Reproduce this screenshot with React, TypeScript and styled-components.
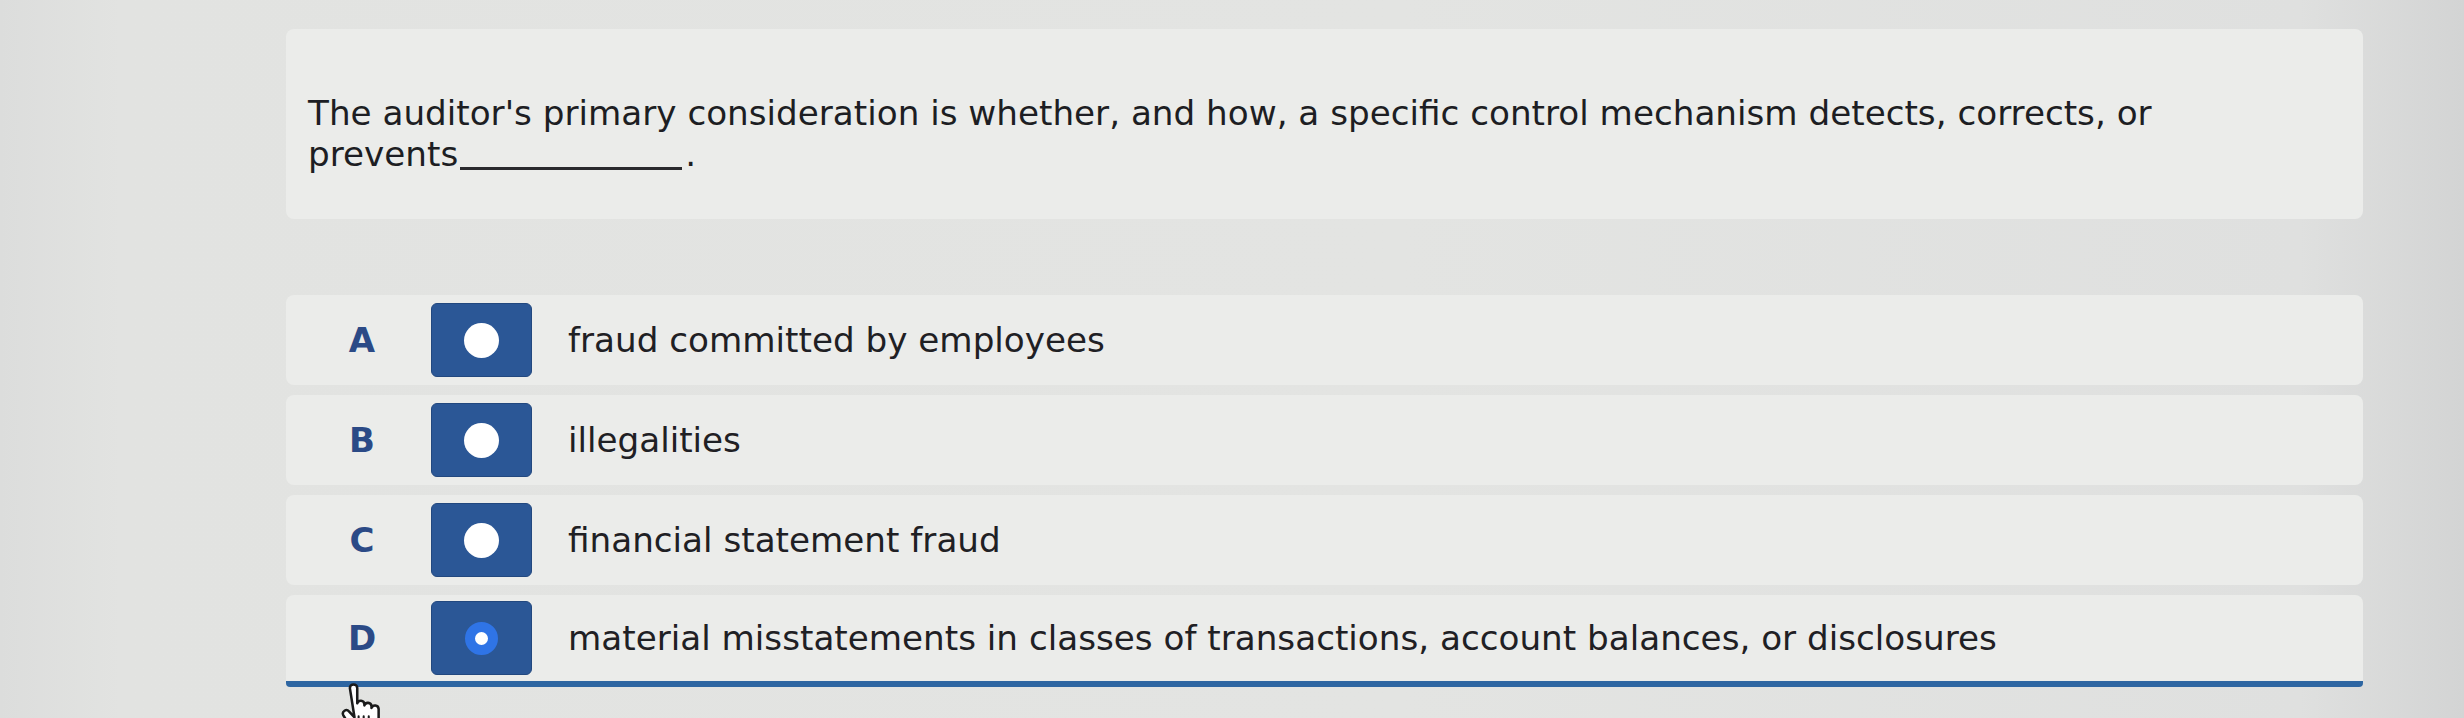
import React from "react";
import styled, { createGlobalStyle } from "styled-components";

const GlobalStyle = createGlobalStyle`
  html, body {
    margin: 0;
    padding: 0;
  }
  body {
    width: 2464px;
    height: 718px;
    overflow: hidden;
    background: linear-gradient(
      to right,
      #dcdddc 0px,
      #e2e3e1 120px,
      #e3e4e2 1400px,
      #dfe0df 2300px,
      #d3d4d4 2464px
    );
    font-family: "DejaVu Sans", Verdana, sans-serif;
  }
`;

const Page = styled.div`
  position: relative;
  width: 2464px;
  height: 718px;
  overflow: hidden;
`;

const Stage = styled.main`
  display: flex;
  flex-direction: column;
  width: 2077px;
  padding: 29px 0 0 286px;
`;

const QuestionCard = styled.section`
  box-sizing: border-box;
  height: 190px;
  padding: 64px 40px 0 22px;
  border-radius: 8px;
  background: #ebecea;
`;

const Prompt = styled.p`
  margin: 0;
  max-width: 1900px;
  font-size: 34.2px;
  line-height: 41px;
  color: #1d1e23;
`;

const Blank = styled.span`
  display: inline-block;
  width: 222px;
  height: 28px;
  margin: 0 3px 0 2px;
  border-bottom: 3px solid #2a2a2e;
  vertical-align: -4px;
`;

const OptionList = styled.div`
  display: flex;
  flex-direction: column;
  gap: 10px;
  margin-top: 76px;
`;

const OptionRow = styled.div<{ $selected?: boolean }>`
  box-sizing: border-box;
  display: flex;
  align-items: center;
  height: ${(p) => (p.$selected ? "92px" : "90px")};
  padding-left: 62px;
  border-radius: 8px;
  background: #ebecea;
  border-bottom: ${(p) => (p.$selected ? "6px solid #2e66a2" : "none")};
  ${(p) =>
    p.$selected
      ? "border-bottom-left-radius: 4px; border-bottom-right-radius: 4px;"
      : ""}
`;

const Letter = styled.span`
  width: 28px;
  text-align: center;
  font-size: 34px;
  font-weight: 700;
  color: #2b4a86;
`;

const RadioBox = styled.span`
  box-sizing: border-box;
  display: flex;
  align-items: center;
  justify-content: center;
  width: 101px;
  height: 74px;
  margin-left: 55px;
  border-radius: 6px;
  background: #2b5796;
  border: 1px solid #22487f;
`;

const RadioDot = styled.span<{ $checked?: boolean }>`
  box-sizing: border-box;
  width: ${(p) => (p.$checked ? "33px" : "35px")};
  height: ${(p) => (p.$checked ? "33px" : "35px")};
  border-radius: 50%;
  background: #ffffff;
  border: ${(p) => (p.$checked ? "10.5px solid #2f74e6" : "none")};
`;

const OptionText = styled.span`
  margin-left: 36px;
  font-size: 34.2px;
  color: #1f2024;
`;

const Cursor = styled.svg`
  position: absolute;
  left: 337px;
  top: 683px;
  width: 46px;
  height: 53px;
`;

const options = [
  { letter: "A", text: "fraud committed by employees" },
  { letter: "B", text: "illegalities" },
  { letter: "C", text: "financial statement fraud" },
  {
    letter: "D",
    text: "material misstatements in classes of transactions, account balances, or disclosures",
    selected: true,
  },
];

export default function App() {
  return (
    <>
      <GlobalStyle />
      <Page>
        <Stage>
          <QuestionCard>
            <Prompt>
              The auditor's primary consideration is whether, and how, a specific control
              mechanism detects, corrects, or prevents
              <Blank />.
            </Prompt>
          </QuestionCard>
          <OptionList>
            {options.map((o) => (
              <OptionRow key={o.letter} $selected={o.selected}>
                <Letter>{o.letter}</Letter>
                <RadioBox>
                  <RadioDot $checked={o.selected} />
                </RadioBox>
                <OptionText>{o.text}</OptionText>
              </OptionRow>
            ))}
          </OptionList>
        </Stage>
        <Cursor viewBox="0 0 20 23">
          <path
            d="M5.6 2.2 a1.6 1.6 0 0 1 3.2 0 v6.6 a1.6 1.6 0 0 1 3.1 0.3 v0.6 a1.6 1.6 0 0 1 3.1 0.3 v0.8 a1.6 1.6 0 0 1 3.1 0.4 v4.8 c0 3.2 -1.8 5.8 -4.6 5.8 h-3.8 c-1.8 0 -2.9 -0.9 -3.8 -2.5 l-3.2 -5.4 a1.5 1.5 0 0 1 2.5 -1.6 l2.4 2.6 z"
            fill="#ffffff"
            stroke="#1b1b1b"
            strokeWidth="1.1"
            strokeLinejoin="round"
          />
          <path
            d="M9.4 14.5 v4 M11.6 14.5 v4 M13.8 14.5 v4"
            stroke="#1b1b1b"
            strokeWidth="0.9"
            strokeLinecap="round"
          />
        </Cursor>
      </Page>
    </>
  );
}
